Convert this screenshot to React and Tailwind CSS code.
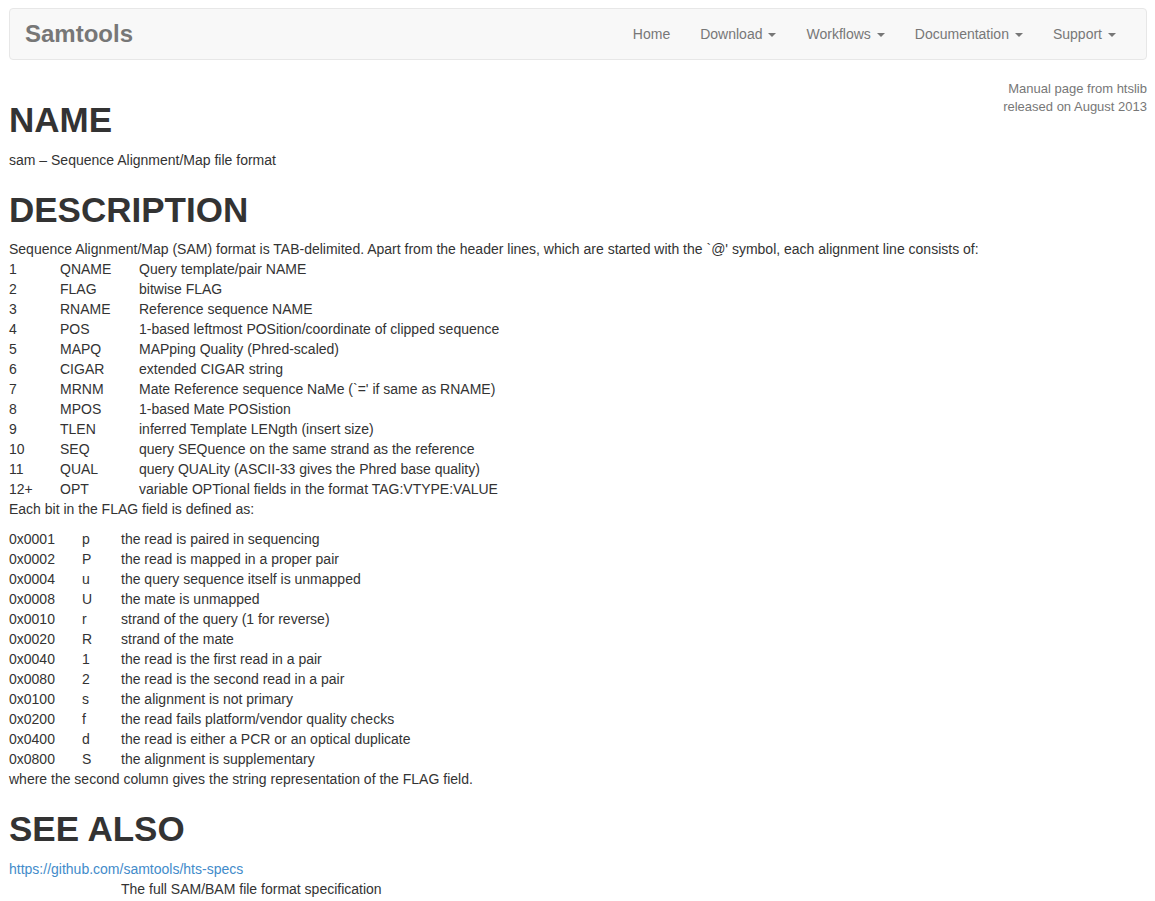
import React from "react";

const fields = [
  ["1", "QNAME", "Query template/pair NAME"],
  ["2", "FLAG", "bitwise FLAG"],
  ["3", "RNAME", "Reference sequence NAME"],
  ["4", "POS", "1-based leftmost POSition/coordinate of clipped sequence"],
  ["5", "MAPQ", "MAPping Quality (Phred-scaled)"],
  ["6", "CIGAR", "extended CIGAR string"],
  ["7", "MRNM", "Mate Reference sequence NaMe (`=' if same as RNAME)"],
  ["8", "MPOS", "1-based Mate POSistion"],
  ["9", "TLEN", "inferred Template LENgth (insert size)"],
  ["10", "SEQ", "query SEQuence on the same strand as the reference"],
  ["11", "QUAL", "query QUALity (ASCII-33 gives the Phred base quality)"],
  ["12+", "OPT", "variable OPTional fields in the format TAG:VTYPE:VALUE"],
];

const flags = [
  ["0x0001", "p", "the read is paired in sequencing"],
  ["0x0002", "P", "the read is mapped in a proper pair"],
  ["0x0004", "u", "the query sequence itself is unmapped"],
  ["0x0008", "U", "the mate is unmapped"],
  ["0x0010", "r", "strand of the query (1 for reverse)"],
  ["0x0020", "R", "strand of the mate"],
  ["0x0040", "1", "the read is the first read in a pair"],
  ["0x0080", "2", "the read is the second read in a pair"],
  ["0x0100", "s", "the alignment is not primary"],
  ["0x0200", "f", "the read fails platform/vendor quality checks"],
  ["0x0400", "d", "the read is either a PCR or an optical duplicate"],
  ["0x0800", "S", "the alignment is supplementary"],
];

const Caret = () => (
  <span className="ml-[6px] inline-block h-0 w-0 align-middle border-t-4 border-x-4 border-x-transparent border-t-[#777]" />
);

const NavItem = ({ label, caret }) => (
  <a href="#" className="block px-[15px] py-[15px] leading-5 text-[#777] hover:text-[#333]">
    {label}
    {caret && <Caret />}
  </a>
);

const App = () => {
  return (
    <div
      className="min-h-screen bg-white pl-[9px] pr-[8px] pt-[8px] text-[14px] leading-5 text-[#333]"
      style={{ fontFamily: '"Liberation Sans", Arial, sans-serif' }}
    >
      {/* navbar */}
      <nav className="mb-5 flex h-[52px] items-center justify-between rounded border border-[#e7e7e7] bg-[#f8f8f8] pl-[15px] pr-[15px]">
        <a href="#" className="text-[24px] font-bold leading-[50px] text-[#777]">
          Samtools
        </a>
        <div className="flex">
          <NavItem label="Home" />
          <NavItem label="Download" caret />
          <NavItem label="Workflows" caret />
          <NavItem label="Documentation" caret />
          <NavItem label="Support" caret />
        </div>
      </nav>

      <div className="flow-root">
        {/* man page info */}
        <div className="float-right text-right text-[13px] leading-[18px] text-[#777]">
          Manual page from htslib
          <br />
          released on August 2013
        </div>

        <h1 className="mt-5 mb-2.5 text-[35px] font-bold leading-[39.6px]">NAME</h1>
        <div>sam – Sequence Alignment/Map file format</div>

        <h1 className="mt-5 mb-2.5 text-[35px] font-bold leading-[39.6px]">DESCRIPTION</h1>
        <div>
          Sequence Alignment/Map (SAM) format is TAB-delimited. Apart from the header lines, which are started with the `@' symbol, each alignment line consists of:
        </div>
        <div className="grid grid-cols-[51px_79px_1fr]">
          {fields.map(([n, name, desc]) => (
            <React.Fragment key={n}>
              <div>{n}</div>
              <div>{name}</div>
              <div>{desc}</div>
            </React.Fragment>
          ))}
        </div>
        <div className="mb-2.5">Each bit in the FLAG field is defined as:</div>
        <div className="grid grid-cols-[73px_39px_1fr]">
          {flags.map(([hex, ch, desc]) => (
            <React.Fragment key={hex}>
              <div>{hex}</div>
              <div>{ch}</div>
              <div>{desc}</div>
            </React.Fragment>
          ))}
        </div>
        <div>where the second column gives the string representation of the FLAG field.</div>

        <h1 className="mt-5 mb-2.5 text-[35px] font-bold leading-[39.6px]">SEE ALSO</h1>
        <a href="#" className="text-[#428bca] hover:underline">
          https://github.com/samtools/hts-specs
        </a>
        <div className="pl-[112px]">The full SAM/BAM file format specification</div>
      </div>
    </div>
  );
};

export default App;
